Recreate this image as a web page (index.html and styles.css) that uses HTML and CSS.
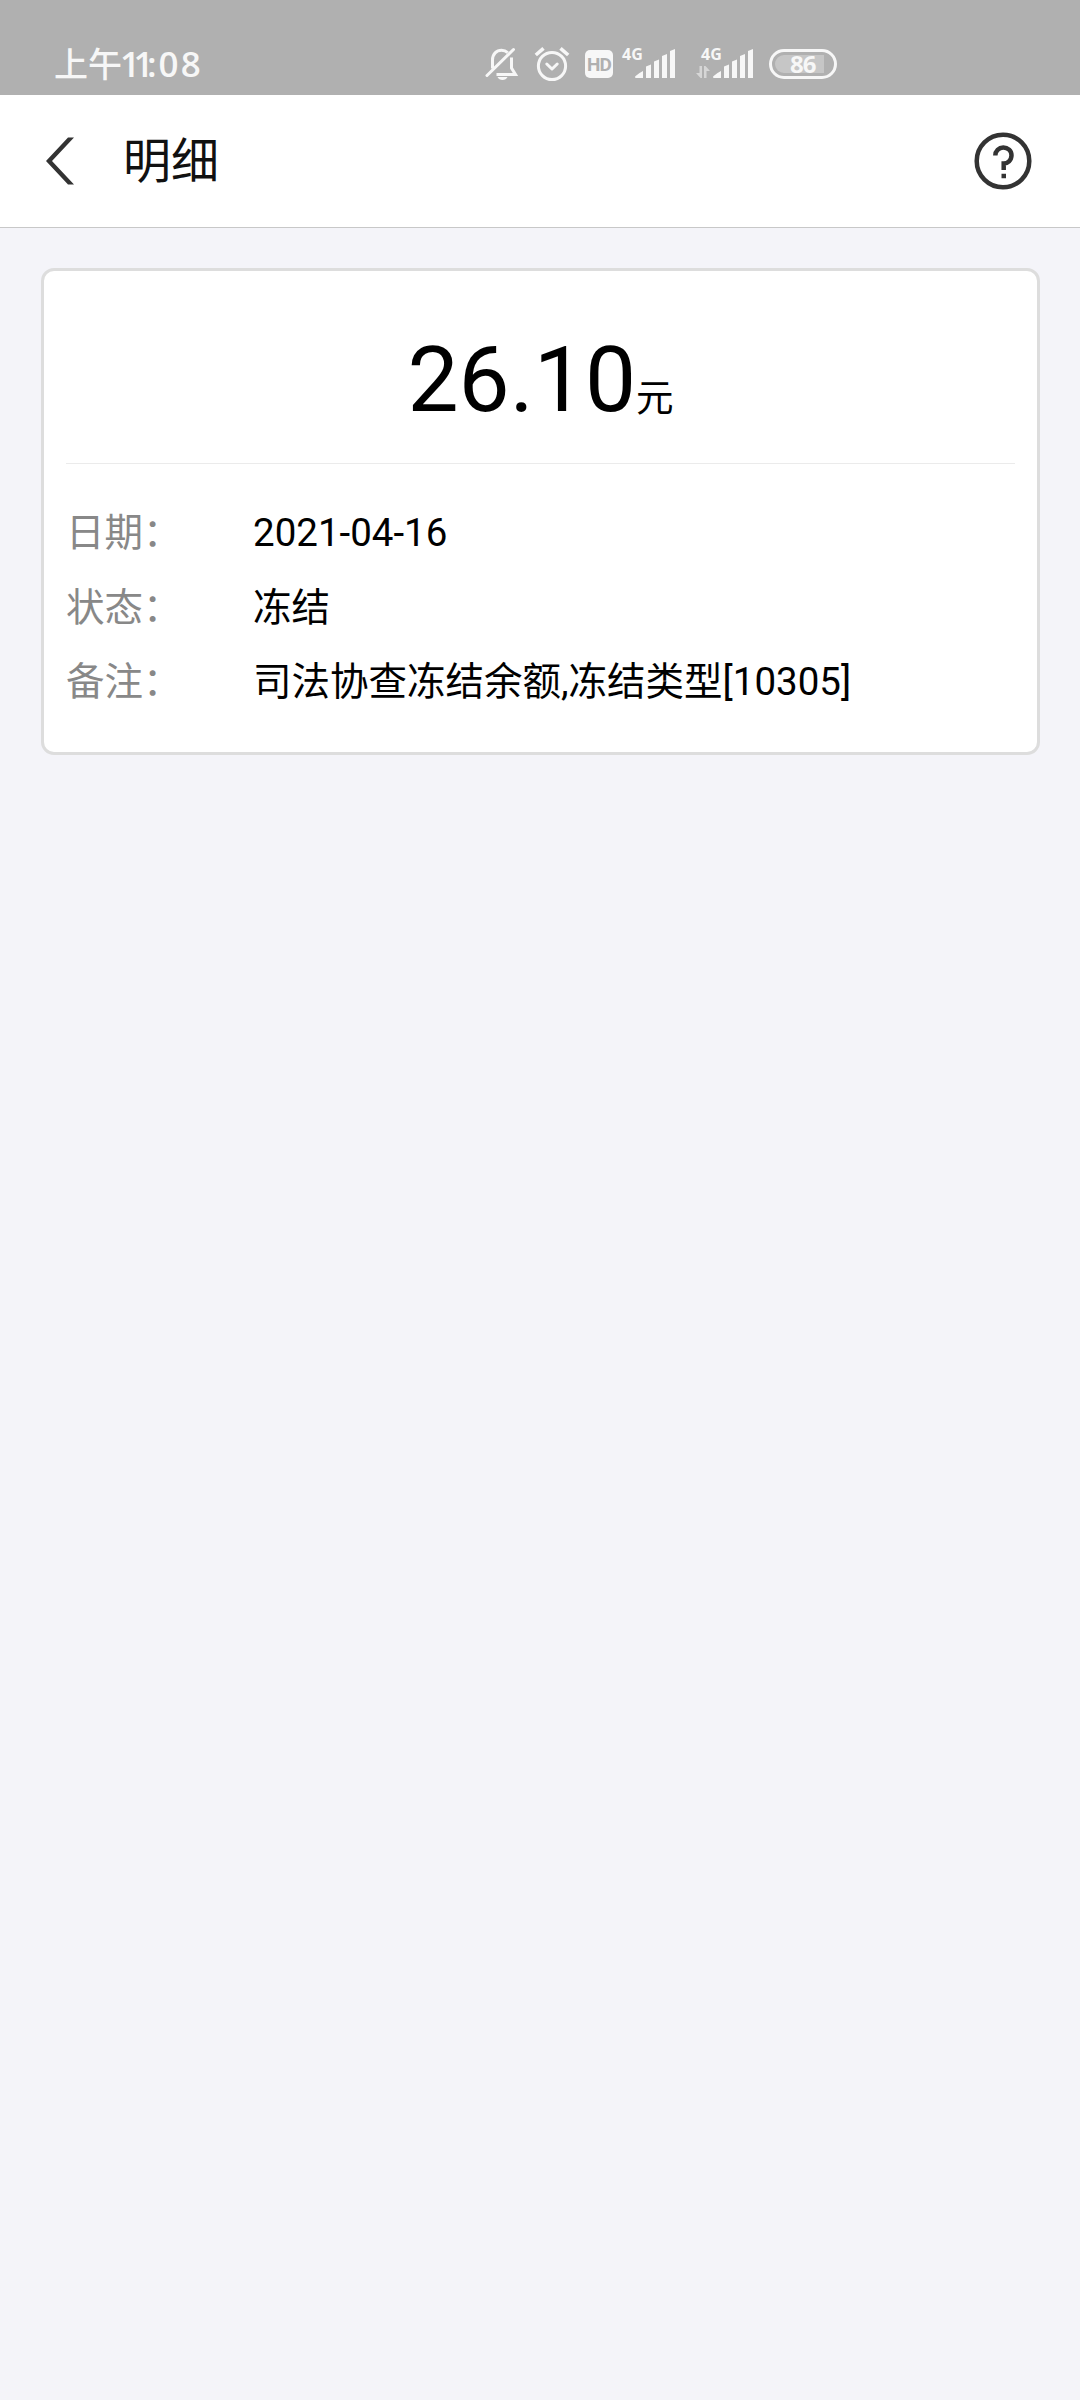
FILE: index.html
```
<!DOCTYPE html>
<html lang="zh-CN">
  <head>
    <meta charset="UTF-8" />
    <title>明细</title>
    <link rel="stylesheet" href="styles.css">
  </head>
  <body>
    <div class="status-bar">
      <div class="time">上午<span class="clock"><span class="hour">11</span>:08</span></div>
      <div class="status-icons">
        <!-- muted bell -->
        <svg class="bell" width="34" height="36" viewBox="0 0 34 36" fill="none" stroke="#f7f7f7" stroke-width="3">
          <path d="M7.5 22.5V14C7.5 8 11.5 4.2 16.5 4.2c2.5 0 4.5.8 6.2 2.4M26.500 11.500v10.500l4 6.500H11.500"/>
          <path d="M2 29.500L28.500 3.500" stroke-linecap="round"/>
          <path d="M12.500 31h10c-1.500 4-8.500 4-10 0z" fill="#f7f7f7" stroke="none"/>
        </svg>
        <!-- alarm -->
        <svg class="alarm" width="36" height="36" viewBox="0 0 36 36" fill="none" stroke="#f7f7f7" stroke-width="3">
          <circle cx="18" cy="20" r="13.600"/>
          <path d="M12.800 18l5.200 5 5.200-5" stroke-linecap="round" stroke-linejoin="round"/>
          <path d="M1.800 9L9.500 2.300M26.500 2.300L34.200 9" stroke-width="3.600"/>
        </svg>
        <div class="hd">HD</div>
        <!-- sim 1 -->
        <div class="signal">
          <span class="net">4G</span>
          <svg width="54" height="36" viewBox="0 0 54 36" fill="#f7f7f7">
            <path d="M14 31c0-1 6-5 8-6v7h-7q-1 0-1-1zM25 20.500l5-2V32h-5zM33 15.500l5-2V32h-5zM41 10l5-2V32h-5zM49 5l5-2V32h-5z"/>
          </svg>
        </div>
        <!-- sim 2 -->
        <div class="signal signal-data">
          <span class="net">4G</span>
          <svg width="58" height="36" viewBox="0 0 58 36" fill="#f7f7f7">
            <path d="M3.500 20H6v12H4.500L0 27h3.500zM8 32V20h1.500l4.500 5h-3.500v7z" fill="#d6d6d6"/>
            <path d="M17 31c0-1 6-5 8-6v7h-7q-1 0-1-1zM28 20.500l5-2V32h-5zM36 15.500l5-2V32h-5zM44 10l5-2V32h-5zM52 5l5-2V32h-5z"/>
          </svg>
        </div>
        <div class="battery"><div class="level">86</div></div>
      </div>
    </div>

    <div class="header">
      <svg class="back" width="28" height="48" viewBox="0 0 28 48" fill="#333">
        <path d="M22 0.500h6L6 24 28 47.500h-6L0 24z"/>
      </svg>
      <h1>明细</h1>
      <svg class="help" width="58" height="58" viewBox="0 0 58 58" fill="none" stroke="#333" stroke-width="4.500">
        <circle cx="29" cy="29" r="26.300"/>
        <path d="M21.300 23.500c0-4.500 3.500-8 8-8s8.200 3.300 8.200 7.800c0 5-4 8.200-7.800 8.200v6.500"/>
        <path d="M27.500 44h4.500"/>
      </svg>
    </div>

    <div class="card">
      <div class="amount">26.10<span class="unit">元</span></div>
      <div class="details">
        <div class="row"><span class="label">日期：</span><span>2021-04-16</span></div>
        <div class="row"><span class="label">状态：</span><span>冻结</span></div>
        <div class="row"><span class="label">备注：</span><span>司法协查冻结余额,冻结类型[10305]</span></div>
      </div>
    </div>
  </body>
</html>
```
FILE: styles.css
```
* { box-sizing: border-box; }
body {
    margin: 0;
    min-height: 2400px;
    background-color: #f4f4f9;
    font-family: Roboto, "Noto Sans CJK SC", sans-serif;
    color: #000;
}
svg { display: block; flex: none; }

/* Status bar */
.status-bar {
    display: flex;
    height: 95px;
    padding: 46px 0 0 54px;
    background-color: #b0b0b0;
    color: #f7f7f7;
}
.time {
    width: 431px;
    height: 36px;
    line-height: 36px;
    font-size: 34px;
    font-weight: 500;
    white-space: nowrap;
}
.clock {
    margin-left: -2px;
    font-family: "Open Sans", sans-serif;
    font-size: 35px;
    font-weight: 600;
    letter-spacing: 2px;
}
.hour { letter-spacing: -6.5px; }
.status-icons { display: flex; height: 36px; }
.alarm { margin-left: 15px; }
.hd {
    width: 28px;
    height: 28px;
    margin: 4px 0 0 15px;
    border-radius: 5px;
    background-color: #f7f7f7;
    color: #b0b0b0;
    font-size: 19px;
    font-weight: bold;
    line-height: 29px;
    letter-spacing: -1px;
    text-align: center;
}
.signal { position: relative; margin-left: 8px; }
.signal-data { margin-left: 21px; }
.net {
    position: absolute;
    top: 0;
    left: 1px;
    font-family: "Open Sans", sans-serif;
    font-size: 16px;
    font-weight: bold;
    line-height: 16px;
}
.signal-data .net { left: 5px; }
.battery {
    width: 68px;
    height: 30px;
    margin: 3px 0 0 15px;
    padding: 3px;
    border: 3px solid #f7f7f7;
    border-radius: 15px;
}
.level {
    width: 49px;
    height: 18px;
    padding-left: 15px;
    border-radius: 9px 0 0 9px;
    background-color: #c6c6c6;
    font-family: "Open Sans", sans-serif;
    font-size: 24px;
    font-weight: bold;
    line-height: 18px;
    letter-spacing: -1px;
}

/* Title bar */
.header {
    display: flex;
    align-items: center;
    height: 133px;
    padding: 0 48px 0 46px;
    border-bottom: 1px solid #c8c8c8;
    background-color: #fff;
}
.header h1 {
    margin: 0 auto 0 49px;
    padding-top: 1px;
    color: #111;
    font-size: 48px;
    font-weight: normal;
    line-height: 64px;
}

/* Detail card */
.card {
    height: 487px;
    margin: 40px 40px 0 41px;
    padding: 0 22px;
    border: 3px solid #ddd;
    border-radius: 13px;
    background-color: #fff;
}
.amount {
    height: 193px;
    padding-top: 55px;
    border-bottom: 1px solid #ebebeb;
    font-size: 91px;
    line-height: 108px;
    text-align: center;
}
.unit { font-size: 37.5px; }
.details { padding-top: 32px; }
.row {
    display: flex;
    font-size: 38.5px;
    line-height: 74.5px;
}
.label { width: 187px; color: #888; }
```
